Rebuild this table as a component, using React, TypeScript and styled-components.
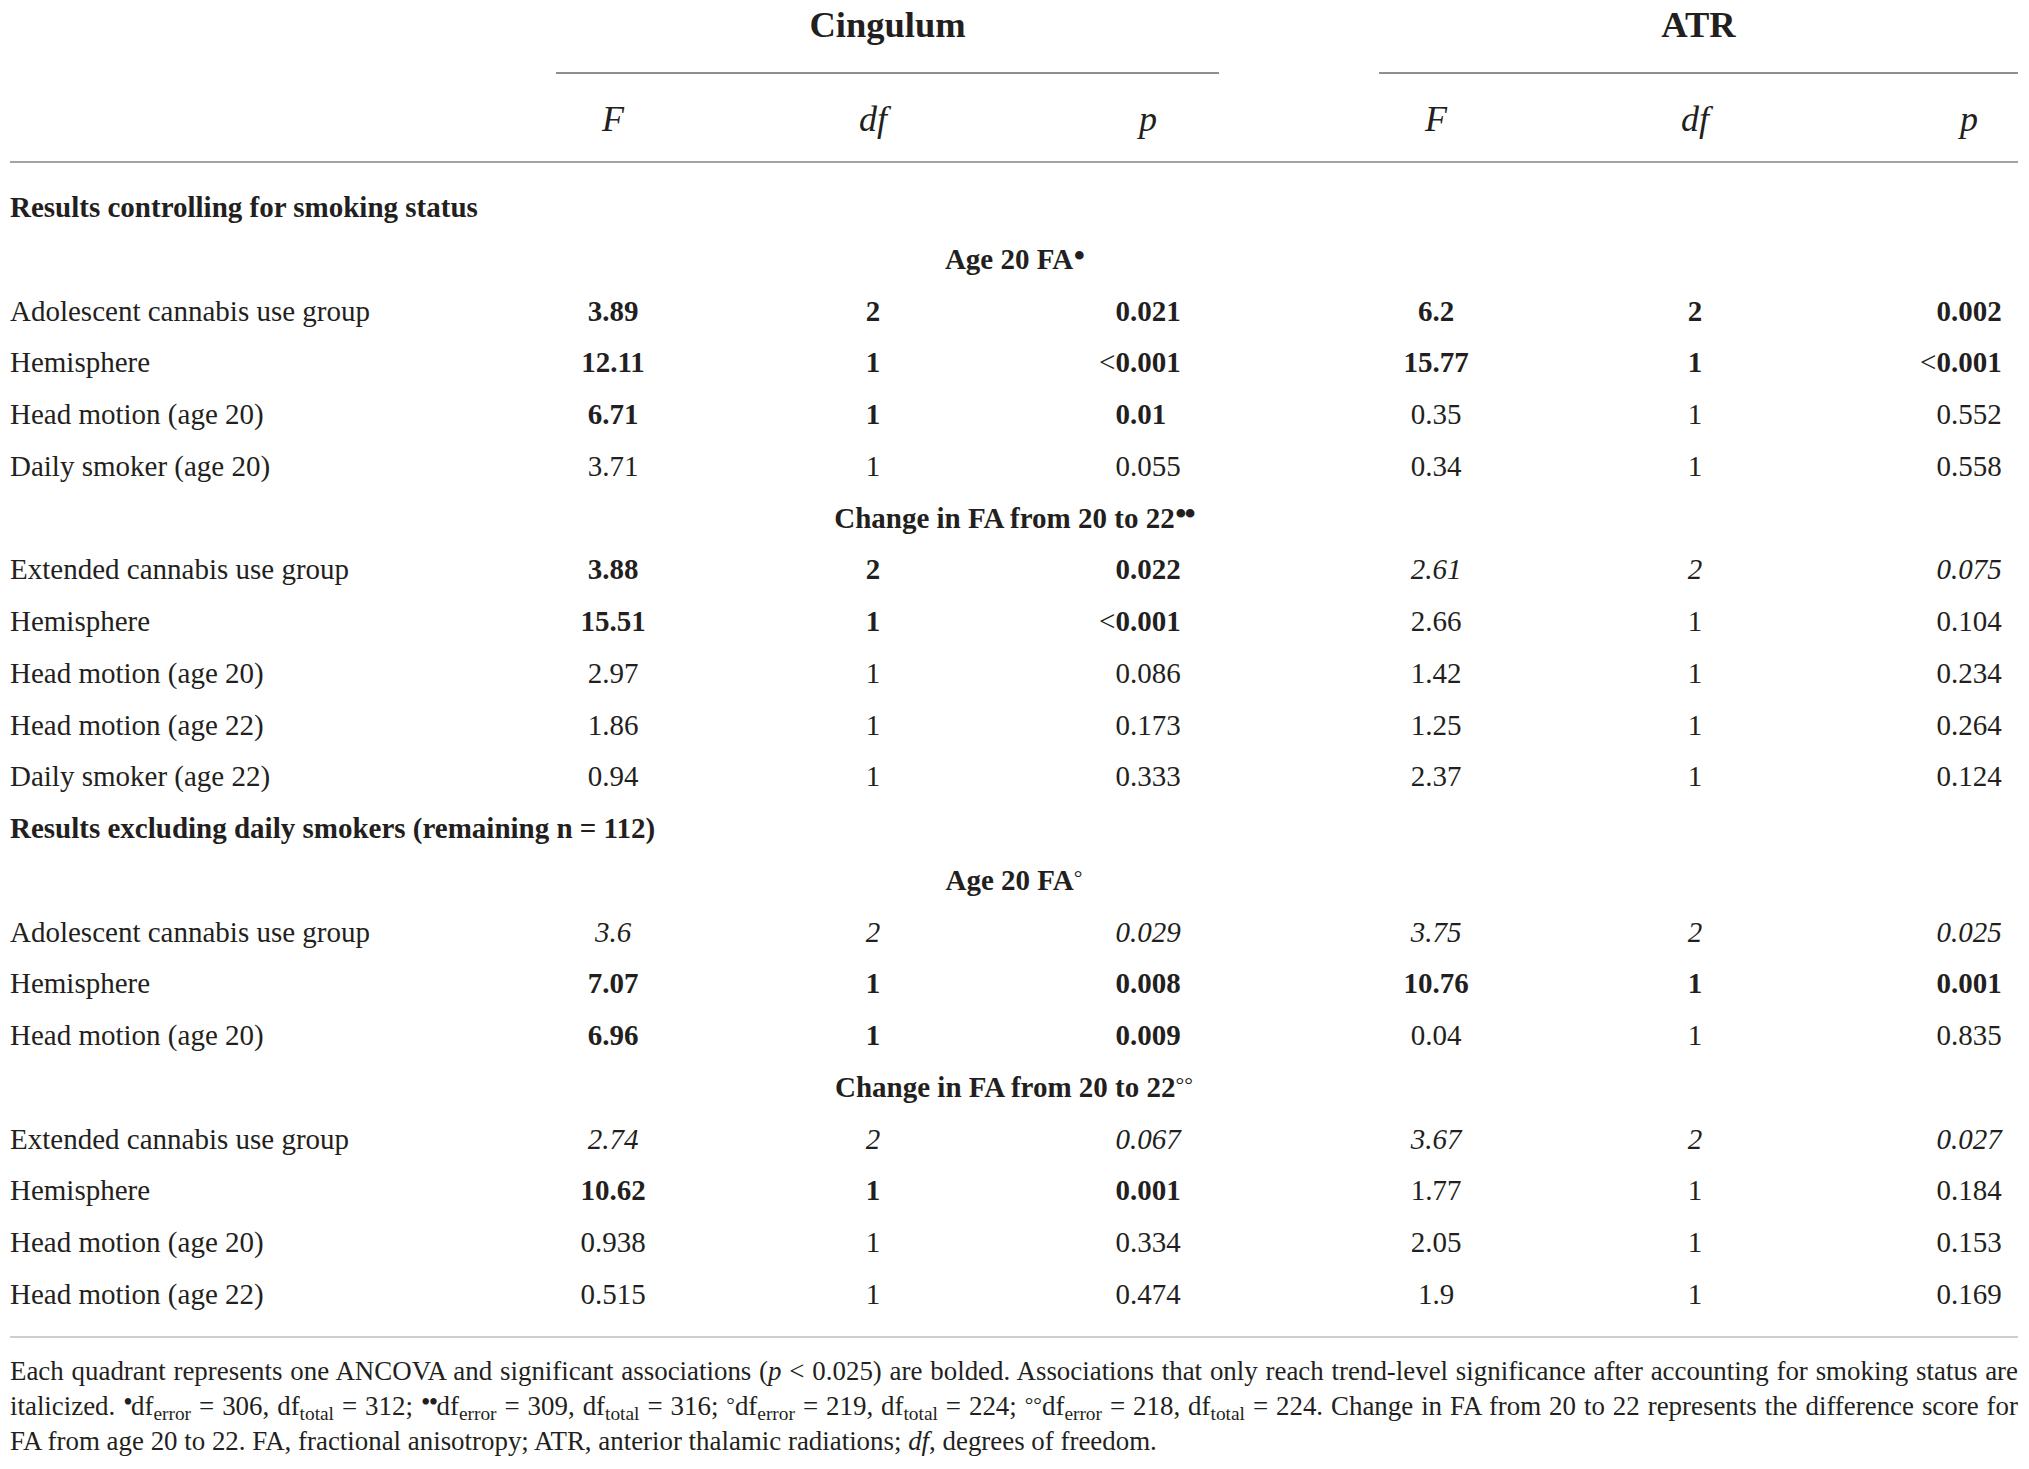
import React from "react";
import styled, { createGlobalStyle } from "styled-components";

const GlobalStyle = createGlobalStyle`
  html, body { margin: 0; padding: 0; background: #ffffff; }
  body {
    font-family: "Liberation Serif", "Times New Roman", serif;
    color: #231f20;
  }
`;

const COLS = "473px 260px 260px 290px 286px 232px 207px";
const LAST_SHIFT = 109;

type Tone = "b" | "i" | undefined;

type Block =
  | { kind: "section"; text: string }
  | { kind: "group"; text: string; mark: "dot" | "deg"; count: number }
  | {
      kind: "row";
      label: string;
      c: [string, string, string];
      ct?: Tone;
      a: [string, string, string];
      at?: Tone;
    };

const blocks: Block[] = [
  { kind: "section", text: "Results controlling for smoking status" },
  { kind: "group", text: "Age 20 FA", mark: "dot", count: 1 },
  { kind: "row", label: "Adolescent cannabis use group", c: ["3.89", "2", "0.021"], ct: "b", a: ["6.2", "2", "0.002"], at: "b" },
  { kind: "row", label: "Hemisphere", c: ["12.11", "1", "<0.001"], ct: "b", a: ["15.77", "1", "<0.001"], at: "b" },
  { kind: "row", label: "Head motion (age 20)", c: ["6.71", "1", "0.01"], ct: "b", a: ["0.35", "1", "0.552"] },
  { kind: "row", label: "Daily smoker (age 20)", c: ["3.71", "1", "0.055"], a: ["0.34", "1", "0.558"] },
  { kind: "group", text: "Change in FA from 20 to 22", mark: "dot", count: 2 },
  { kind: "row", label: "Extended cannabis use group", c: ["3.88", "2", "0.022"], ct: "b", a: ["2.61", "2", "0.075"], at: "i" },
  { kind: "row", label: "Hemisphere", c: ["15.51", "1", "<0.001"], ct: "b", a: ["2.66", "1", "0.104"] },
  { kind: "row", label: "Head motion (age 20)", c: ["2.97", "1", "0.086"], a: ["1.42", "1", "0.234"] },
  { kind: "row", label: "Head motion (age 22)", c: ["1.86", "1", "0.173"], a: ["1.25", "1", "0.264"] },
  { kind: "row", label: "Daily smoker (age 22)", c: ["0.94", "1", "0.333"], a: ["2.37", "1", "0.124"] },
  { kind: "section", text: "Results excluding daily smokers (remaining n = 112)" },
  { kind: "group", text: "Age 20 FA", mark: "deg", count: 1 },
  { kind: "row", label: "Adolescent cannabis use group", c: ["3.6", "2", "0.029"], ct: "i", a: ["3.75", "2", "0.025"], at: "i" },
  { kind: "row", label: "Hemisphere", c: ["7.07", "1", "0.008"], ct: "b", a: ["10.76", "1", "0.001"], at: "b" },
  { kind: "row", label: "Head motion (age 20)", c: ["6.96", "1", "0.009"], ct: "b", a: ["0.04", "1", "0.835"] },
  { kind: "group", text: "Change in FA from 20 to 22", mark: "deg", count: 2 },
  { kind: "row", label: "Extended cannabis use group", c: ["2.74", "2", "0.067"], ct: "i", a: ["3.67", "2", "0.027"], at: "i" },
  { kind: "row", label: "Hemisphere", c: ["10.62", "1", "0.001"], ct: "b", a: ["1.77", "1", "0.184"] },
  { kind: "row", label: "Head motion (age 20)", c: ["0.938", "1", "0.334"], a: ["2.05", "1", "0.153"] },
  { kind: "row", label: "Head motion (age 22)", c: ["0.515", "1", "0.474"], a: ["1.9", "1", "0.169"] },
];

const Page = styled.div`
  width: 2008px;
  padding: 0 11px 0 10px;
`;

const HeadGrid = styled.div`
  display: grid;
  grid-template-columns: ${COLS};
  padding-bottom: 18px;
  border-bottom: 2px solid #a3a3a3;
`;

const Blank = styled.div``;

const GroupTitle = styled.div<{ $col: string; $inset: string }>`
  grid-column: ${(p) => p.$col};
  margin: ${(p) => p.$inset};
  padding: 1px 0 23px;
  border-bottom: 2px solid #8f8f8f;
  text-align: center;
  font-size: 36.5px;
  line-height: 48px;
  font-weight: 700;
`;

const ColTitle = styled.div<{ $shift?: number }>`
  margin-top: 21px;
  padding-left: ${(p) => p.$shift ?? 0}px;
  text-align: center;
  font-size: 36px;
  line-height: 48px;
  font-style: italic;
`;

const BodyGrid = styled.div`
  display: grid;
  grid-template-columns: ${COLS};
  grid-auto-rows: 51.75px;
  padding: 19px 0 15.5px;
  border-bottom: 2px solid #cfcfcf;
  font-size: 29px;
  line-height: 51.75px;
`;

const SectionTitle = styled.div`
  grid-column: 1 / -1;
  font-weight: 700;
  white-space: nowrap;
`;

const GroupLabel = styled.div`
  grid-column: 1 / -1;
  text-align: center;
  font-weight: 700;
  white-space: nowrap;
`;

const RowLabel = styled.div`
  white-space: nowrap;
`;

const Value = styled.div<{ $tone?: Tone; $shift?: number }>`
  padding-left: ${(p) => p.$shift ?? 0}px;
  text-align: center;
  white-space: nowrap;
  font-weight: ${(p) => (p.$tone === "b" ? 700 : 400)};
  font-style: ${(p) => (p.$tone === "i" ? "italic" : "normal")};
`;

const Lt = styled.span`
  margin-left: -0.564em;
  font-weight: 400;
`;

const Ghost = styled.span`
  visibility: hidden;
`;

const Dot = styled.span`
  font-size: 1.1em;
  line-height: 0;
  vertical-align: 0.1em;
  letter-spacing: -0.06em;
  margin-left: 0.02em;
`;

const Deg = styled.span`
  font-size: 0.75em;
  line-height: 0;
  vertical-align: 0.25em;
  font-weight: 400;
`;

const Notes = styled.div`
  margin-top: 16px;
  font-size: 26.9px;
  line-height: 35px;
`;

const NoteLine = styled.p<{ $last?: boolean }>`
  margin: 0;
  text-align: justify;
  text-align-last: ${(p) => (p.$last ? "left" : "justify")};
`;

const Em = styled.i`
  font-style: italic;
`;

const NoteSup = styled.span`
  font-size: 1em;
  line-height: 0;
  vertical-align: 0.15em;
  letter-spacing: -0.06em;
`;

const NoteDeg = styled.span`
  font-size: 0.8em;
  line-height: 0;
  vertical-align: 0.15em;
`;

const Sub = styled.span`
  font-size: 0.72em;
  line-height: 0;
  vertical-align: -0.28em;
`;

function PValue({ v }: { v: string }) {
  if (v.startsWith("<")) {
    return (
      <>
        <Lt>&lt;</Lt>
        {v.slice(1)}
      </>
    );
  }
  const dec = v.split(".")[1]?.length ?? 0;
  return (
    <>
      {v}
      {dec < 3 && <Ghost>{"0".repeat(3 - dec)}</Ghost>}
    </>
  );
}

function Triple({ vals, tone, last }: { vals: [string, string, string]; tone?: Tone; last?: boolean }) {
  return (
    <>
      <Value $tone={tone}>{vals[0]}</Value>
      <Value $tone={tone}>{vals[1]}</Value>
      <Value $tone={tone} $shift={last ? LAST_SHIFT : 0}>
        <PValue v={vals[2]} />
      </Value>
    </>
  );
}

function Df({ sub }: { sub: string }) {
  return (
    <>
      df<Sub>{sub}</Sub>
    </>
  );
}

export default function App() {
  return (
    <Page>
      <GlobalStyle />
      <HeadGrid>
        <Blank />
        <GroupTitle $col="2 / 5" $inset="0 74px 0 73px">
          Cingulum
        </GroupTitle>
        <GroupTitle $col="5 / 8" $inset="0 0 0 86px">
          ATR
        </GroupTitle>
        <Blank />
        <ColTitle>F</ColTitle>
        <ColTitle>df</ColTitle>
        <ColTitle>p</ColTitle>
        <ColTitle>F</ColTitle>
        <ColTitle>df</ColTitle>
        <ColTitle $shift={LAST_SHIFT}>p</ColTitle>
      </HeadGrid>

      <BodyGrid>
        {blocks.map((b, i) => {
          if (b.kind === "section") return <SectionTitle key={i}>{b.text}</SectionTitle>;
          if (b.kind === "group")
            return (
              <GroupLabel key={i}>
                {b.text}
                {b.mark === "dot" ? (
                  <Dot>{"•".repeat(b.count)}</Dot>
                ) : (
                  <Deg>{"°".repeat(b.count)}</Deg>
                )}
              </GroupLabel>
            );
          return (
            <React.Fragment key={i}>
              <RowLabel>{b.label}</RowLabel>
              <Triple vals={b.c} tone={b.ct} />
              <Triple vals={b.a} tone={b.at} last />
            </React.Fragment>
          );
        })}
      </BodyGrid>

      <Notes>
        <NoteLine>
          Each quadrant represents one ANCOVA and significant associations (<Em>p</Em> &lt; 0.025) are bolded.
          Associations that only reach trend-level significance after accounting for smoking status are
        </NoteLine>
        <NoteLine>
          italicized. <NoteSup>•</NoteSup>
          <Df sub="error" /> = 306, <Df sub="total" /> = 312; <NoteSup>••</NoteSup>
          <Df sub="error" /> = 309, <Df sub="total" /> = 316; <NoteDeg>°</NoteDeg>
          <Df sub="error" /> = 219, <Df sub="total" /> = 224; <NoteDeg>°°</NoteDeg>
          <Df sub="error" /> = 218, <Df sub="total" /> = 224. Change in FA from 20 to 22 represents the
          difference score for
        </NoteLine>
        <NoteLine $last>
          FA from age 20 to 22. FA, fractional anisotropy; ATR, anterior thalamic radiations; <Em>df</Em>, degrees
          of freedom.
        </NoteLine>
      </Notes>
    </Page>
  );
}
